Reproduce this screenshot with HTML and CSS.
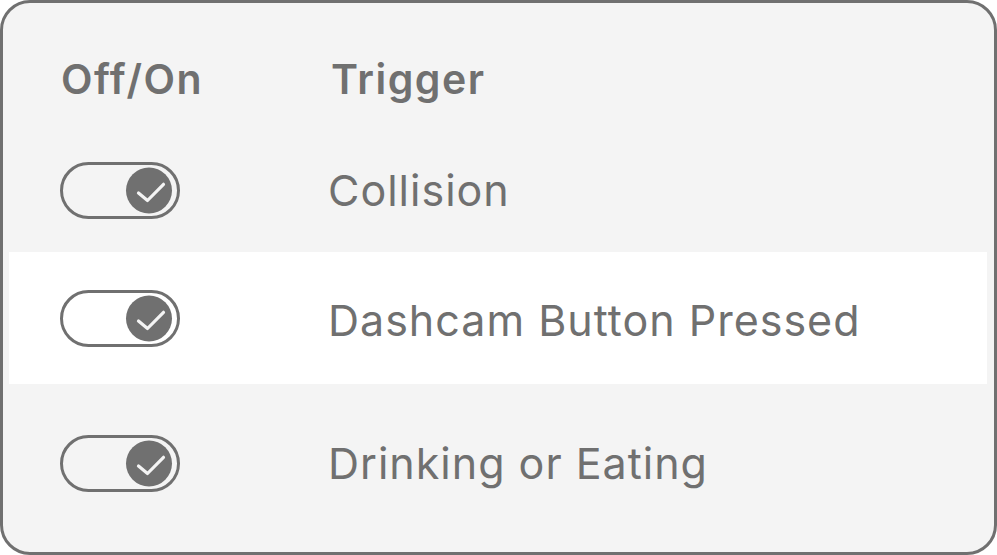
FILE: index.html
```html
<!DOCTYPE html>
<html>
<head>
<meta charset="utf-8">
<link rel="stylesheet" href="styles.css">
</head>
<body>
<div class="card">
  <div class="row header">
    <div class="col-toggle">Off/On</div>
    <div class="col-label">Trigger</div>
  </div>
  <div class="row r1">
    <div class="col-toggle">
      <svg class="toggle" width="120" height="57" viewBox="0 0 120 57"><rect x="1.5" y="1.5" width="117" height="54" rx="27" fill="none" stroke="#707070" stroke-width="3"/><circle cx="89" cy="28.5" r="23" fill="#707070"/><path d="M78.5 31 L87.5 38.5 L103.5 22.3" fill="none" stroke="#f4f4f4" stroke-width="3.2" stroke-linecap="round" stroke-linejoin="round"/></svg>
    </div>
    <div class="col-label">Collision</div>
  </div>
  <div class="row r2">
    <div class="col-toggle">
      <svg class="toggle" width="120" height="57" viewBox="0 0 120 57"><rect x="1.5" y="1.5" width="117" height="54" rx="27" fill="none" stroke="#707070" stroke-width="3"/><circle cx="89" cy="28.5" r="23" fill="#707070"/><path d="M78.5 31 L87.5 38.5 L103.5 22.3" fill="none" stroke="#f4f4f4" stroke-width="3.2" stroke-linecap="round" stroke-linejoin="round"/></svg>
    </div>
    <div class="col-label">Dashcam Button Pressed</div>
  </div>
  <div class="row r3">
    <div class="col-toggle">
      <svg class="toggle" width="120" height="57" viewBox="0 0 120 57"><rect x="1.5" y="1.5" width="117" height="54" rx="27" fill="none" stroke="#707070" stroke-width="3"/><circle cx="89" cy="28.5" r="23" fill="#707070"/><path d="M78.5 31 L87.5 38.5 L103.5 22.3" fill="none" stroke="#f4f4f4" stroke-width="3.2" stroke-linecap="round" stroke-linejoin="round"/></svg>
    </div>
    <div class="col-label">Drinking or Eating</div>
  </div>
</div>
</body>
</html>
```
FILE: styles.css
```css
html, body {
  margin: 0;
  padding: 0;
  background: #ffffff;
}
.card {
  box-sizing: border-box;
  width: 997px;
  height: 555px;
  border: 3px solid #707070;
  border-radius: 30px;
  background: #f4f4f4;
  padding: 0 7px 0 6px;
  font-family: "Inter", "Open Sans", sans-serif;
  color: #707070;
  display: flex;
  flex-direction: column;
}
.row {
  display: flex;
  align-items: center;
  padding-left: 51px;
}
.col-toggle {
  width: 120px;
  flex: none;
  display: flex;
}
.col-label {
  margin-left: 148px;
  font-size: 43px;
  letter-spacing: 1px;
  line-height: 1;
  white-space: nowrap;
}
.header {
  height: 125px;
  font-size: 41px;
  font-weight: 600;
  letter-spacing: 1.5px;
  line-height: 1;
  align-items: flex-start;
  padding-top: 56px;
  box-sizing: border-box;
}
.header .col-toggle {
  padding-left: 1px;
}
.header .col-label {
  font-size: 41px;
  letter-spacing: 1.5px;
  margin-left: 150px;
}
.r1 {
  height: 124px;
}
.r2 {
  height: 132px;
  background: #ffffff;
}
.r2 .col-label {
  padding-top: 4px;
}
.r3 {
  height: 158px;
}
.toggle {
  display: block;
}
```
